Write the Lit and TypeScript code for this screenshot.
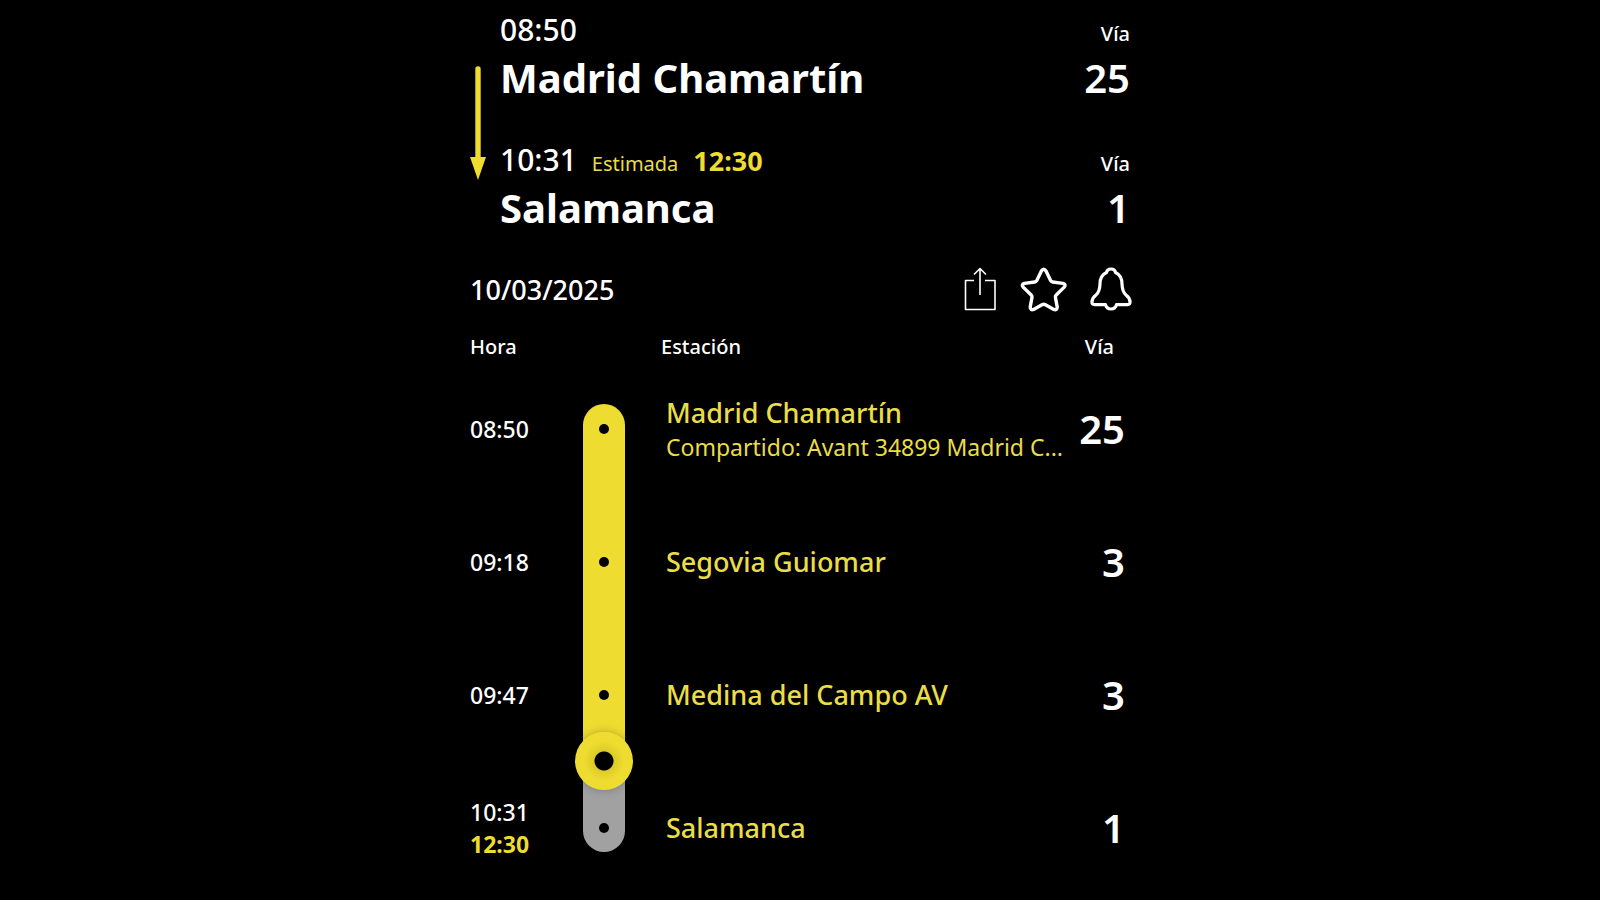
import { LitElement, html, css, svg, nothing } from "lit";
import { customElement } from "lit/decorators.js";
import { classMap } from "lit/directives/class-map.js";

interface Stop {
  time: string;
  estimated?: string;
  station: string;
  note?: string;
  track: string;
  reached: boolean;
}

const stops: Stop[] = [
  {
    time: "08:50",
    station: "Madrid Chamartín",
    note: "Compartido: Avant 34899 Madrid C...",
    track: "25",
    reached: true,
  },
  { time: "09:18", station: "Segovia Guiomar", track: "3", reached: true },
  { time: "09:47", station: "Medina del Campo AV", track: "3", reached: true },
  { time: "10:31", estimated: "12:30", station: "Salamanca", track: "1", reached: false },
];

const shareShape = svg`
  <path d="M10 14.5H1.5V43.5H31V14.5H21M16 29V2.5M10 8.5L16 2.5L22 8.5" stroke-width="1.6" />`;

const starShape = svg`
  <path
    d="M21.4 5Q23.7 1.4 26 5L30.6 14.6Q31.2 15.8 32.6 16L43 17.4Q46.6 18.4 44 21.4L36.2 29Q35.2 30 35.4 31.4L37.2 41Q37.2 44.6 33.8 43.4L25 38.6Q23.7 38 22.4 38.6L13.6 43.4Q10.2 44.6 10.2 41L12 31.4Q12.2 30 11.2 29L3.4 21.4Q0.8 18.4 4.4 17.4L14.8 16Q16.2 15.8 16.8 14.6Z"
    stroke-width="3.4" />`;

const bellShape = svg`
  <path
    d="M16.5 6.5Q17 3 21 3Q25 3 25.5 6.5Q32 9.5 32 18Q32.3 26 36 29Q40 32 40 36Q40.3 38.6 37.5 38.6H26.5Q25.5 43 21 43Q16.5 43 15.5 38.6H4.5Q1.7 38.6 2 36Q2 32 6 29Q9.7 26 10 18Q10 9.5 16.5 6.5Z"
    stroke-width="3.2" />`;

@customElement("app-root")
export class AppRoot extends LitElement {
  static styles = css`
    :host {
      --yellow: #eedc30;
      --yellow-text: #e9dd48;
      display: block;
      min-height: 100vh;
      box-sizing: border-box;
      padding: 8px 16px 0;
      background: #000;
      color: #fff;
      font-family: "Noto Sans", "Open Sans", sans-serif;
      font-weight: 500;
    }
    .trip {
      max-width: 660px;
      margin: 0 auto;
    }
    .summary {
      display: flex;
      gap: 14px;
    }
    .arrow {
      flex: none;
      display: block;
      margin-top: 58px;
    }
    .ends {
      flex: 1;
      display: grid;
      gap: 34px;
    }
    .end {
      display: grid;
      grid-template-columns: 1fr auto;
      grid-template-rows: 44px 52px;
      align-items: baseline;
    }
    .when {
      display: flex;
      align-items: baseline;
      gap: 15px;
      font-size: 30px;
      line-height: 44px;
    }
    .estimate-label {
      color: var(--yellow-text);
      font-size: 20px;
      font-weight: 400;
    }
    .estimate {
      color: var(--yellow);
      font-size: 27px;
      font-weight: 700;
    }
    .via {
      text-align: right;
      font-size: 20px;
    }
    .name {
      margin: 0;
      font-size: 40px;
      line-height: 52px;
      font-weight: 700;
    }
    .end .track {
      font-size: 40px;
      line-height: 52px;
      font-weight: 600;
      text-align: right;
    }
    .toolbar {
      display: flex;
      align-items: center;
      justify-content: space-between;
      margin-top: 31px;
      height: 48px;
      font-size: 27px;
    }
    .actions {
      display: flex;
      gap: 24px;
      margin-right: -2px;
    }
    .action {
      padding: 0;
      border: 0;
      background: none;
      color: inherit;
      cursor: pointer;
    }
    .action svg {
      display: block;
      overflow: visible;
      fill: none;
      stroke: currentColor;
      stroke-linejoin: round;
    }
    .stops {
      width: 100%;
      margin-top: 19px;
      border-collapse: collapse;
      table-layout: fixed;
    }
    .stops th,
    .stops td {
      padding: 0;
      text-align: left;
      font-weight: 500;
    }
    .stops thead th {
      font-size: 20px;
      line-height: 30px;
    }
    .col-time {
      width: 113px;
    }
    .col-rail {
      width: 42px;
    }
    .col-track {
      width: 58px;
    }
    .stops thead .head-station {
      padding-left: 36px;
    }
    .stops thead .head-track {
      padding-right: 16px;
      text-align: right;
    }
    .stops .time {
      font-size: 23px;
      line-height: 32px;
    }
    .late {
      display: block;
      color: var(--yellow);
      font-weight: 700;
    }
    .rail {
      position: relative;
      box-sizing: border-box;
      height: 133px;
    }
    .bar {
      display: flex;
      align-items: center;
      justify-content: center;
      height: 133px;
      background: var(--yellow);
    }
    .first .rail,
    .last .rail {
      display: flex;
    }
    .first .rail {
      align-items: flex-end;
    }
    .first .bar,
    .last .bar {
      flex: 1;
      box-sizing: border-box;
      height: 91px;
    }
    .first .bar {
      padding-bottom: 42px;
      border-radius: 21px 21px 0 0;
    }
    .last .bar {
      padding-top: 42px;
      border-radius: 0 0 21px 21px;
    }
    .ahead .bar {
      background: #a1a1a1;
    }
    .dot {
      width: 10px;
      height: 10px;
      border-radius: 50%;
      background: #000;
    }
    .train {
      position: absolute;
      top: -29px;
      left: -8px;
      width: 58px;
      height: 58px;
      border-radius: 50%;
      background: radial-gradient(circle, #000 0 9px, #ddcc28 10px, var(--yellow) 20px);
      box-shadow: 0 0 8px rgba(0, 0, 0, 0.25);
    }
    .stops .station {
      padding-left: 41px;
      color: var(--yellow-text);
      font-size: 27px;
      line-height: 36px;
      white-space: nowrap;
    }
    .note {
      display: block;
      font-size: 23px;
      line-height: 32px;
      font-weight: 400;
    }
    .stops .track {
      padding-right: 5px;
      font-size: 40px;
      line-height: 52px;
      font-weight: 600;
      text-align: right;
    }
  `;

  private renderEnd(time: string, name: string, track: string, estimate?: string) {
    return html`
      <div class="end">
        <div class="when">
          <time>${time}</time>
          ${estimate
            ? html`<span class="estimate-label">Estimada</span
                ><time class="estimate">${estimate}</time>`
            : nothing}
        </div>
        <div class="via">Vía</div>
        <h2 class="name">${name}</h2>
        <div class="track">${track}</div>
      </div>
    `;
  }

  private renderAction(label: string, width: number, shape: unknown) {
    return html`
      <button class="action" type="button" aria-label=${label}>
        <svg width=${width} height="46" viewBox="0 0 ${width} 46" aria-hidden="true">${shape}</svg>
      </button>
    `;
  }

  private renderStop(stop: Stop, index: number) {
    const previous = stops[index - 1];
    const rowClass = {
      first: index === 0,
      last: index === stops.length - 1,
      ahead: !stop.reached,
    };
    return html`
      <tr class=${classMap(rowClass)}>
        <td class="time">
          <time>${stop.time}</time>
          ${stop.estimated ? html`<time class="late">${stop.estimated}</time>` : nothing}
        </td>
        <td>
          <div class="rail">
            <div class="bar"><span class="dot"></span></div>
            ${previous?.reached && !stop.reached ? html`<span class="train"></span>` : nothing}
          </div>
        </td>
        <td class="station">
          ${stop.station}${stop.note ? html`<span class="note">${stop.note}</span>` : nothing}
        </td>
        <td class="track">${stop.track}</td>
      </tr>
    `;
  }

  render() {
    return html`
      <main class="trip">
        <header class="summary">
          <svg class="arrow" width="16" height="114" viewBox="0 0 16 114" aria-hidden="true">
            <path d="M8 3V94" stroke="#eedc30" stroke-width="5.4" stroke-linecap="round" />
            <path d="M0 91H16L8 114Z" fill="#eedc30" />
          </svg>
          <div class="ends">
            ${this.renderEnd("08:50", "Madrid Chamartín", "25")}
            ${this.renderEnd("10:31", "Salamanca", "1", "12:30")}
          </div>
        </header>

        <div class="toolbar">
          <time>10/03/2025</time>
          <div class="actions">
            ${this.renderAction("Compartir", 32, shareShape)}
            ${this.renderAction("Favorito", 46, starShape)}
            ${this.renderAction("Avisos", 42, bellShape)}
          </div>
        </div>

        <table class="stops">
          <colgroup>
            <col class="col-time" />
            <col class="col-rail" />
            <col />
            <col class="col-track" />
          </colgroup>
          <thead>
            <tr>
              <th scope="col">Hora</th>
              <td></td>
              <th scope="col" class="head-station">Estación</th>
              <th scope="col" class="head-track">Vía</th>
            </tr>
          </thead>
          <tbody>
            ${stops.map((stop, index) => this.renderStop(stop, index))}
          </tbody>
        </table>
      </main>
    `;
  }
}
